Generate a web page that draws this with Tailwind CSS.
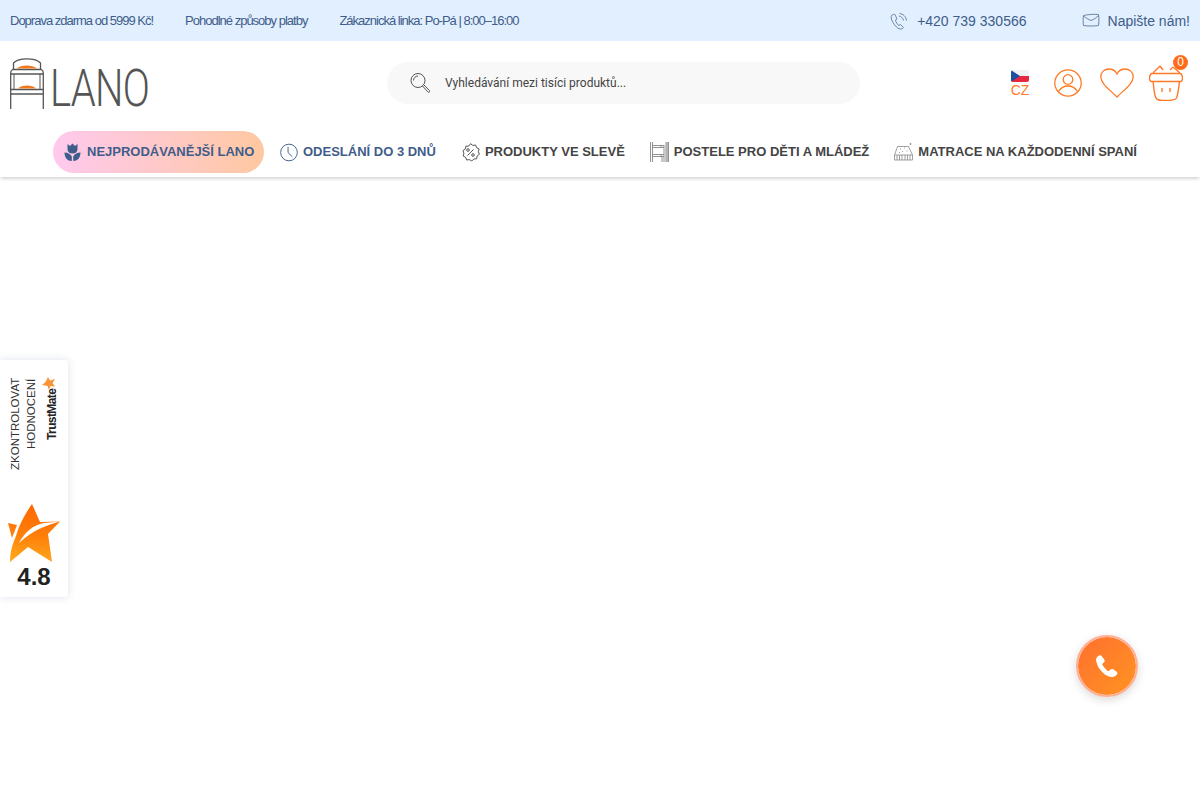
<!DOCTYPE html>
<html lang="cs">
<head>
    <meta charset="UTF-8">
    <title>Lano</title>
    <script src="https://cdn.jsdelivr.net/npm/@tailwindcss/browser@4"></script>
</head>
<body class="bg-white h-[800px] overflow-hidden relative font-['Liberation_Sans',sans-serif]">
    <!-- Top bar -->
    <div class="h-[41px] bg-[#e1effe] flex items-center justify-between pl-[10px] pr-[10px] text-[#3f5d8a]">
        <div class="flex gap-8 text-[13px] tracking-[-1px]">
            <span>Doprava zdarma od 5999 Kč!</span>
            <span>Pohodlné způsoby platby</span>
            <span>Zákaznická linka: Po-Pá | 8:00–16:00</span>
        </div>
        <div class="flex items-center text-sm">
            <svg class="w-[18px] h-[18px] mr-[9px]" viewBox="0 0 18 18" fill="none" stroke="#6f86a8" stroke-width="1"><path d="M2 3c-1.500 1.500-1 4 1 7.500S7.500 16.500 10 17c1.500.3 3-.5 3.500-1.500l-3-3-1.500 1c-1.500-.5-3.500-4-3.500-5.500L7 7 5 2.500C4 2.300 3 2.300 2 3z"/><path d="M9 4c2 .3 4 2 4.500 4.500M9.500 1.500c3.500.3 6.500 3 7 7"/></svg>
            <span class="mr-[55px]">+420 739 330566</span>
            <svg class="w-[18px] h-[15px] mr-2" viewBox="0 0 18 15" fill="none" stroke="#6f86a8" stroke-width="1"><path d="M1.500 2.500C5 1.500 13 1 16.500 1.500c.5 3 .5 8 0 11-4 .7-11 .7-15 0-.5-3-.5-7 0-10z"/><path d="M1.500 3c2.500 2 5 3.500 7.500 4.500 3-1 5.500-3 7.500-5"/></svg>
            <span>Napište nám!</span>
        </div>
    </div>

    <!-- Main header -->
    <div class="h-[90px] relative flex items-start pl-[10px]">
        <a class="flex items-end mt-[16px] h-[52px] w-[140px]">
            <svg class="w-[34px] h-[51px] shrink-0" viewBox="0 0 34 51" fill="none" stroke="#555" stroke-width="1.300">
                <path d="M.700 51V15c0-2 .5-3 2-3.500h28.600c1.500.5 2 1.500 2 3.500v36"/>
                <path d="M.700 16h32.600M.700 31.500h32.600M.700 36h32.600"/>
                <path d="M3.500 11.500V5c5-5.500 22-5.500 27 0v6.500"/>
                <path d="M4 31.500V16M30 31.500V16" stroke-width="1"/>
                <path d="M7 10.500c3-4 16-4 20 0z" fill="#f47a20" stroke="none"/>
                <path d="M8 30.500c3-4 15-4 18 0z" fill="#f47a20" stroke="none"/>
            </svg>
            <span class="block text-[#555] text-[52px] leading-[46px] font-['Roboto',sans-serif] font-light tracking-[-1px] ml-[6px] h-[44px] scale-x-[0.77] origin-left translate-y-[1px]">LANO</span>
        </a>
        <div class="absolute left-[387px] top-[21px] w-[473px] h-[42px] rounded-full bg-[#f8f8f8] flex items-center pl-[23px]">
            <svg class="w-[20px] h-[22px] mr-[15px]" viewBox="0 0 20 22" fill="none" stroke="#555" stroke-width="1"><circle cx="8" cy="8.500" r="7"/><path d="M3.500 8.500c0-2.500 2-4.500 4.500-4.500"/><path d="M12.500 14l5.500 6c1 1 2.500-.3 1.500-1.500L14 13"/></svg>
            <span class="text-xs text-[#444] font-['Roboto',sans-serif]">Vyhledávání mezi tisíci produktů...</span>
        </div>
        <div class="absolute left-[1011px] top-[29px] w-[18px] flex flex-col items-center">
            <svg class="w-[18px] h-[12px] rounded-[2px]" viewBox="0 0 18 12"><rect width="18" height="6" fill="#f1f1f4"/><rect y="6" width="18" height="6" fill="#e6273e"/><path d="M0 0l9 6-9 6z" fill="#1d4f9e"/></svg>
            <span class="text-sm leading-[16px] text-[#ff7a26]">CZ</span>
        </div>
        <svg class="absolute left-[1054px] top-[28px] w-[28px] h-[28px]" viewBox="0 0 28 28" fill="none" stroke="#ff7a26" stroke-width="1.300"><circle cx="14" cy="14" r="13.200"/><circle cx="14" cy="10.500" r="4.800"/><path d="M4.500 22.500c2.500-4 6-5.500 9.500-5.500s7 1.500 9.500 5.500"/></svg>
        <svg class="absolute left-[1100px] top-[27px] w-[34px] h-[30px]" viewBox="0 0 34 30" fill="none" stroke="#ff7a26" stroke-width="1.300"><path d="M17 29C10 22 1 16 .800 9 .800 4 4.500 1 9 1c3.500 0 6.500 2 8 5 1.500-3 4.500-5 8-5 4.500 0 8.200 3 8.200 8C33 16 24 22 17 29z"/></svg>
        <svg class="absolute left-[1149px] top-[24px] w-[34px] h-[36px]" viewBox="0 0 34 36" fill="none" stroke="#ff7a26" stroke-width="1.400"><path d="M3 8.500h28c2.500 0 3.500 7 1 8H2C-.5 15.500.500 8.500 3 8.500z"/><path d="M4 16.500C5 23 5 30 7 33c1 2.500 5 2.500 10 2.500s9 0 10.500-2.500c1.500-3 2-10 3-16.500"/><path d="M11 1L4 8M11 1l3 4M24 2l7 6M24 2l-3 3"/><path d="M13 23v4M21 23v4"/></svg>
        <span class="absolute left-[1173px] top-[14px] w-[15px] h-[15px] rounded-full bg-[#ff6b1a] text-white text-xs leading-[15px] text-center">0</span>
    </div>

    <!-- Nav -->
    <nav class="h-[46px] shadow-[0_3px_3px_-1px_rgba(0,0,0,0.16)] flex items-start pl-[53px] text-[13px] font-bold whitespace-nowrap">
        <a class="h-[42px] w-[211px] rounded-full bg-gradient-to-r from-[#ffc9ee] to-[#ffc8a0] flex items-center pl-[11px] text-[#3f5d8a]">
            <svg class="w-[17px] h-[18px] mr-[6px]" viewBox="0 0 17 18" fill="#3f5d8a"><path d="M3.500 1l2.500 2L8.500.500 11 3l2.500-2v5c0 3-2 4.500-5 4.500s-5-1.500-5-4.500z"/><path d="M.500 9.500c3 0 6 1.500 7.300 4V18C3.500 18 .500 14.500.500 9.500zM16.500 9.500c-3 0-6 1.500-7.300 4V18c4.300 0 7.300-3.500 7.300-8.500z"/></svg>
            NEJPRODÁVANĚJŠÍ LANO
        </a>
        <a class="h-[42px] flex items-center ml-[16px] text-[#3f5d8a]">
            <svg class="w-[18px] h-[19px] mr-[5px]" viewBox="0 0 19 19" fill="none" stroke="#3f5d8a" stroke-width="1"><circle cx="9.500" cy="9.500" r="8.800"/><path d="M8.500 3.500v6l4.500 4.500"/></svg>
            ODESLÁNÍ DO 3 DNŮ
        </a>
        <a class="h-[42px] flex items-center ml-[25px] text-[#444]">
            <svg class="w-[19px] h-[19px] mr-[5px]" viewBox="0 0 19 19" fill="none" stroke="#444" stroke-width="0.900"><path d="M9.500.700l2.300 1.700 2.800-.4 1 2.700 2.500 1.200-.7 2.800 1 2.600-2.300 1.700-.5 2.800-2.800.2-2 2-2.400-1.400-2.800.4-1-2.700-2.400-1.300.7-2.700-.9-2.700 2.300-1.600.6-2.800 2.800-.1z"/><path d="M6.500 12.500l6-6"/><circle cx="7" cy="7" r="1.300"/><circle cx="12" cy="12" r="1.300"/></svg>
            PRODUKTY VE SLEVĚ
        </a>
        <a class="h-[42px] flex items-center ml-[25px] text-[#444]">
            <svg class="w-[19px] h-[20px] mr-[5px]" viewBox="0 0 19 20" fill="none" stroke="#777" stroke-width="0.800"><path d="M.500 0v20M2.500 0v20M16 0v20M18.500 0v20M17.200 0v20"/><path d="M2.500 3.500H14M2.500 5.500H14M2.500 12.500H14M2.500 14.500H14M11 3.500v2M11 12.500v2M12 14.500V20M14 3v17"/></svg>
            POSTELE PRO DĚTI A MLÁDEŽ
        </a>
        <a class="h-[42px] flex items-center ml-[25px] text-[#444]">
            <svg class="w-[19px] h-[18px] mr-[5px]" viewBox="0 0 19 18" fill="none" stroke="#888" stroke-width="0.800"><path d="M.500 12L3.500 3.500h11L18.500 12v5H.500z"/><path d="M.500 12h18M3 12v5M5.500 12v5M8 12v5M11 12v5M13.500 12v5M16 12v5"/><path d="M6 6h1M10 5h1M8 8.500h1M12.500 8h1M5 9.500h1M15.500 1h2M16.500 0v2" /></svg>
            MATRACE NA KAŽDODENNÍ SPANÍ
        </a>
    </nav>

    <!-- TrustMate widget -->
    <div class="absolute left-0 top-[360px] w-[68px] h-[237px] bg-white rounded-r-[4px] shadow-[0_0_8px_rgba(90,120,160,0.22)]">
        <div class="absolute left-[8px] top-[18px] [writing-mode:vertical-rl] rotate-180 text-[11.500px] leading-[14px] text-[#333] h-[92px] text-left">ZKONTROLOVAT</div>
        <div class="absolute left-[24px] top-[18px] [writing-mode:vertical-rl] rotate-180 text-[11.500px] leading-[14px] text-[#333] h-[71px]">HODNOCENÍ</div>
        <div class="absolute left-[45px] top-[28px] [writing-mode:vertical-rl] rotate-180 text-[12px] leading-[14px] font-bold text-[#222] tracking-[-0.6px] h-[52px]">TrustMate</div>
        <svg class="absolute left-[42px] top-[17px] w-[13px] h-[13px]" viewBox="0 0 13 13"><path d="M6 0l2 3.500L13 2l-2.500 4L13 9.500 8.500 9 7 13 5.500 9 0 8l3.500-3z" fill="#f8943a"/></svg>
        <svg class="absolute left-[8px] top-[143px] w-[52px] h-[60px]" viewBox="0 0 52 60">
            <defs><linearGradient id="st" gradientUnits="userSpaceOnUse" x1="30" y1="0" x2="24" y2="60"><stop offset="0" stop-color="#ff6400"/><stop offset="0.55" stop-color="#ff7f0a"/><stop offset="1" stop-color="#ffab1f"/></linearGradient></defs>
            <path d="M24 1L32 19 52 18.500 40 31 44 59 20 44 2 59C2 48 5 40 8 33 11 22 17 11 24 1z" fill="url(#st)"/>
            <path d="M0 20l9 2-5 13z" fill="url(#st)"/>
            <path d="M11 40C17 29 25 22 36 20L52 18.500C38 22 24 28 11 40z" fill="#fff"/>
        </svg>
        <div class="absolute left-0 top-[203px] w-[68px] text-center text-2xl leading-[28px] font-bold text-[#222]">4.8</div>
    </div>

    <!-- Call button -->
    <button class="absolute left-[1076px] top-[635px] w-[62px] h-[62px] rounded-full bg-gradient-to-br from-[#ff6f2e] to-[#ff9420] border-2 border-[#ffae94] bg-clip-padding shadow-[0_3px_10px_rgba(0,0,0,0.15)] flex items-center justify-center">
        <svg class="w-[24px] h-[24px]" viewBox="0 0 24 24" fill="#fff"><path d="M6.200 1.500c-1-.6-2-.4-2.800.3C2 3 .8 4.500 1.200 7c.7 4 3 8 6 11 2.700 2.700 6 4.700 9.300 5 2.200.2 4-.8 5.200-2.200.8-1 1-2.200 0-3l-3.500-2.500c-1-.6-1.800-.5-2.600.2l-1.400 1.300c-.6.400-1.100.4-1.700 0-2-1.500-3.700-3.500-5-5.700-.4-.6-.3-1.100.2-1.600l1.400-1.300c.7-.7.800-1.600.3-2.500z"/></svg>
    </button>
</body>
</html>
